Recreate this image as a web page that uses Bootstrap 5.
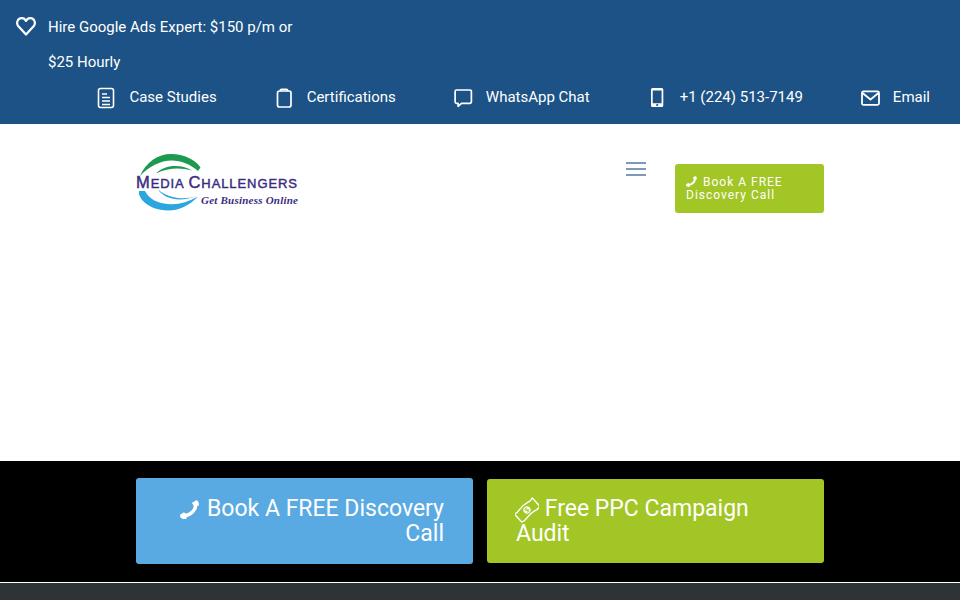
<!DOCTYPE html>
<html lang="en">
<head>
<meta charset="utf-8">
<title>Media Challengers</title>
<link href="https://cdn.jsdelivr.net/npm/bootstrap@5.3.0/dist/css/bootstrap.min.css" rel="stylesheet">
<style>
html,body{height:600px;overflow:hidden;}
body{font-family:Roboto,"Liberation Sans",sans-serif;background:#fff;}
.topbar{height:124px;background:#1c5285;color:#fff;font-size:15px;line-height:35px;padding:10px 30px 0 16px;}
.promo{width:280px;}
.promo-ico{width:20px;height:20px;flex:none;margin:6px 12px 0 0;}
.topbar-link{color:#fff;text-decoration:none;gap:12px;}
.topbar-link svg{width:20px;height:22px;flex:none;}
.topbar-links{gap:58px;}
.mainarea{height:337px;padding:29px 136px 0;}
.logo-svg{width:164px;height:60px;display:block;}
.logo-a{font-family:"Liberation Sans",Arial,sans-serif;font-weight:400;fill:#3a2d7f;stroke:#3a2d7f;stroke-width:.45px;}
.logo-b{font-family:"Liberation Serif",serif;font-style:italic;font-weight:700;fill:#3a2d7f;}
.burger{width:20px;height:14px;margin:9px 29px 0 0;border-top:2px solid #7d98b8;border-bottom:2px solid #7d98b8;}
.burger-mid{height:2px;background:#7d98b8;margin-top:4px;}
.nav-cta{width:149px;height:49px;margin-top:11px;background:#a2c626;color:#fff;font-size:12px;line-height:13px;letter-spacing:1px;border-radius:3px;padding:12px 11px;text-decoration:none;display:block;}
.nav-cta svg{width:12px;height:12px;margin-right:1px;vertical-align:-2px;}
.ctaband{height:121px;background:#000;padding:17px 136px 0;gap:14px;}
.big-cta{display:block;width:337px;color:#fff;font-size:23px;line-height:25px;border-radius:3px;text-decoration:none;}
.big-blue{height:86px;background:#59aae2;text-align:right;padding:18px 29px 0 29px;}
.big-green{height:84px;margin-top:1px;background:#a2c626;padding:17px 60px 0 29px;}
.big-blue svg{width:21px;height:21px;margin-right:0;vertical-align:-5px;}
.big-green svg{width:24px;height:26px;vertical-align:0;margin:0 0 -7px -1px;}
.footstrip{height:18px;background:#2e3436;border-top:1px solid #fff;}
</style>
</head>
<body>
<svg width="0" height="0" class="d-none">
  <symbol id="handset" viewBox="0 0 20 20"><path fill="none" stroke="#fff" stroke-width="3.400" stroke-linecap="round" d="M14.700 3.800c.8 5-3.500 10-10.200 11.200"/><path fill="#fff" d="M11.900 2.300 14.700.6c.9-.5 1.800-.4 2.300.4.900 1.300 1.100 3 1 4.300l-4 .9-2.300-2.600c-.3-.5-.2-1 .2-1.300ZM.6 13.500l3.200-1.900 2.700 2.300-.4 4.100c-1.200.3-2.900.3-4.300-.3C.7 17.300.1 16 .1 15c0-.6.100-1.200.5-1.500Z"/></symbol>
</svg>
<header class="topbar">
  <div class="d-flex promo">
    <svg class="promo-ico" viewBox="0 0 20 20" fill="none" stroke="#fff" stroke-width="2.200" stroke-linejoin="round"><path d="M10 18.500 2.200 10C.3 7.600 1 3.400 4 2.400c2.400-.8 4.800.2 6 2.500 1.200-2.300 3.600-3.300 6-2.500 3 1 3.700 5.200 1.800 7.600L10 18.500Z"/></svg>
    <div>Hire Google Ads Expert: $150 p/m or $25 Hourly</div>
  </div>
  <nav class="d-flex justify-content-end topbar-links">
    <a class="d-flex align-items-center topbar-link" href="#"><svg viewBox="0 0 20 22" fill="none" stroke="#fff" stroke-width="1.600"><rect x="1.500" y="1.500" width="15" height="19" rx="2"/><path d="M5 7h5M5 10.500h8M5 14h8M5 17.500h8" stroke-width="1.500"/></svg><span>Case Studies</span></a>
    <a class="d-flex align-items-center topbar-link" href="#"><svg viewBox="0 0 20 22" fill="none" stroke="#fff" stroke-width="1.700"><rect x="2.500" y="4" width="13.500" height="16" rx="2"/><path d="M5.500 4.200V3.300c0-.6.400-.9 1-.9h5c.6 0 1 .3 1 .9v.9" stroke-width="1.800"/></svg><span>Certifications</span></a>
    <a class="d-flex align-items-center topbar-link" href="#"><svg viewBox="0 0 20 22" fill="none" stroke="#fff" stroke-width="1.700" stroke-linejoin="round"><path d="M2.600 3h13.300A1.500 1.500 0 0 1 17.400 4.500v10.300a1.500 1.500 0 0 1-1.500 1.500H7.500l-3.400 3v-3H2.600a1.500 1.500 0 0 1-1.500-1.500V4.500A1.500 1.500 0 0 1 2.600 3Z"/></svg><span>WhatsApp Chat</span></a>
    <a class="d-flex align-items-center topbar-link" href="#"><svg viewBox="0 0 20 22"><path fill="#fff" fill-rule="evenodd" d="M4.500 1h9.300a1.500 1.500 0 0 1 1.500 1.500v16a1.500 1.500 0 0 1-1.500 1.500H4.500A1.500 1.500 0 0 1 3 18.500v-16A1.500 1.500 0 0 1 4.500 1Zm.2 2.500v12.700h8.900V3.500ZM9.200 16.900a1.100 1.100 0 1 0 0 2.200 1.100 1.100 0 0 0 0-2.200Z"/></svg><span>+1 (224) 513-7149</span></a>
    <a class="d-flex align-items-center topbar-link" href="#"><svg viewBox="0 0 20 22" fill="none" stroke="#fff" stroke-width="1.800" stroke-linejoin="round"><rect x="1" y="4.400" width="17" height="13.400" rx="1.500"/><path d="m1.500 6 8 6.500 8-6.500"/></svg><span>Email</span></a>
  </nav>
</header>
<main class="mainarea d-flex align-items-start">
  <svg class="logo-svg" viewBox="0 0 164 60">
    <path d="M4 23C10 9 22 1 35 1c13 0 25 6 29.500 13.500L62 18C54 11 45 7.500 36 7.500 24 7.500 13 13.500 4 23Z" fill="#1e9a4f"/>
    <path d="M20 20.500C28 12 44 10.500 56 17.500 44 14 31 15 20 20.500Z" fill="#1e9a4f"/>
    <path d="M3 38c-.6 3 .8 6 3.500 9.500C12.500 54 22 57.500 32 57.500c11 0 21-4.500 30-14-10 5.500-20 8.500-30 7.500C21 50 13 46 9 38Z" fill="#2ba6de"/>
    <path d="M22 36.500c6 9 21 13.500 39 6.500-8 2.500-17 3-24 1-6-1.500-11-4-15-7.500Z" fill="#2ba6de"/>
    <text class="logo-a" x="0" y="34.500" font-size="16.500" textLength="161" lengthAdjust="spacing">M<tspan font-size="13">EDIA </tspan>C<tspan font-size="13">HALLENGERS</tspan></text>
    <text class="logo-b" x="65" y="51" font-size="11" textLength="97" lengthAdjust="spacing">Get Business Online</text>
  </svg>
  <div class="ms-auto burger"><div class="burger-mid"></div></div>
  <a class="nav-cta" href="#"><svg><use href="#handset"/></svg> Book A FREE Discovery Call</a>
</main>
<section class="ctaband d-flex align-items-start">
  <a class="big-cta big-blue" href="#"><svg><use href="#handset"/></svg> Book A FREE Discovery Call</a>
  <a class="big-cta big-green" href="#"><svg viewBox="0 0 24 26"><g transform="rotate(-42 12 13)" fill="none" stroke="#fff" stroke-width="1.400" stroke-linejoin="round"><path d="M0 7.500c1.500 1 4 1 6 .4 4-1 8-1 12 0 2 .5 4.500.5 6-.4v11c-1.500 1-4 1-6 .4-4-1-8-1-12 0-2 .5-4.500.5-6-.4Z"/><circle cx="12" cy="13" r="3.600" fill="#fff" stroke="none"/><path d="M13.500 11.500c-1-.8-3-.6-3 .6s3 .8 3 1.900-2 1.300-3 .5M12 10v6" stroke="#a2c626" stroke-width=".8"/></g></svg> Free PPC Campaign Audit</a>
</section>
<div class="footstrip"></div>
<script src="https://cdn.jsdelivr.net/npm/bootstrap@5.3.0/dist/js/bootstrap.bundle.min.js"></script>
</body>
</html>
